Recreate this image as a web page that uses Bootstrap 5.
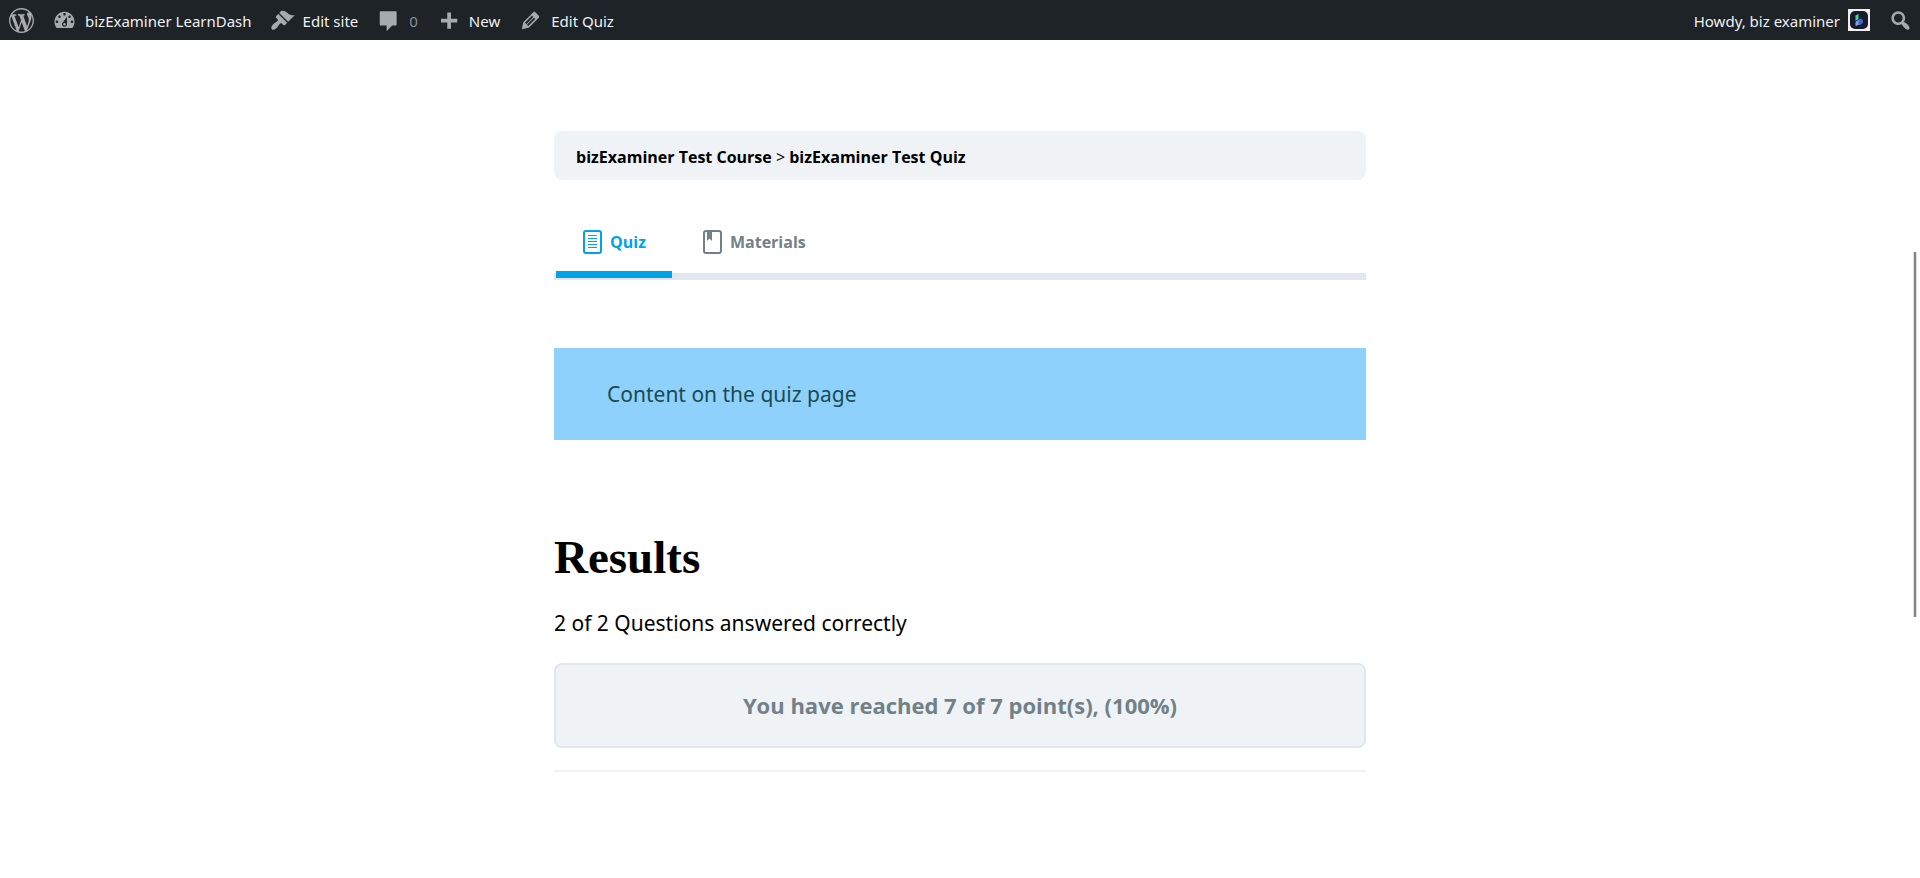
<!DOCTYPE html>
<html lang="en">
<head>
<meta charset="utf-8">
<meta name="viewport" content="width=device-width, initial-scale=1">
<title>bizExaminer Test Quiz</title>
<link rel="stylesheet" href="https://cdn.jsdelivr.net/npm/bootstrap@5.3.0/dist/css/bootstrap.min.css">
<style>
  body { font-family: "Noto Sans", "Open Sans", sans-serif; font-size: 21px; line-height: 32px; color: #000; background: #fff; }
  a { color: inherit; text-decoration: none; }
  .adminbar { height: 40px; background: #1d2327; color: #f0f0f1; font-size: 15px; line-height: 40px; padding-right: 2px; }
  .adminbar a { display: flex; align-items: center; gap: 8px; height: 40px; padding: 0 9px; white-space: nowrap; }
  .adminbar a:last-child { padding-right: 5px; }
  .adminbar span { padding-top: 2px; }
  .adminbar svg { width: 25px; height: 25px; fill: #a7aaad; flex: none; }
  .adminbar .dim { color: #8c8f94; }
  .adminbar .avatar { width: 22px; height: 22px; }
  .quiz-col { max-width: 812px; margin: 91px auto 0; }
  .crumbs { background: #eff3f6; border-radius: 8px; padding: 14px 22px 10px; font-family: "Open Sans", sans-serif; font-size: 16px; line-height: 25px; }
  .crumbs a { font-weight: 700; }
  .quiz-tabs { margin-top: 32px; border-bottom: 7px solid #e2e6ee; padding-left: 2px; font-family: "Open Sans", sans-serif; font-size: 16px; line-height: 24px; }
  .quiz-tabs button { display: flex; align-items: center; gap: 8px; height: 66px; padding: 0 30px; margin-bottom: -5px; border: 0; border-bottom: 7px solid transparent; background: none; color: #728188; font-weight: 700; }
  .quiz-tabs button.active { color: #00a2e8; border-bottom-color: #00a2e8; padding: 0 26px; }
  .quiz-tabs svg { width: 20px; height: 24px; fill: none; stroke: currentColor; }
  .intro { margin: 68px 0 0; padding: 30px 53px; background: #8ed1fc; color: #1b4b52; }
  .result-title { margin: 89px 0 0; font-family: "Liberation Serif", serif; font-size: 47px; line-height: 56px; font-weight: 700; }
  .answered { margin: 22px 0 0; }
  .points { margin: 24px 0 22px; padding: 24px 20px 25px; border: 2px solid #e2e7ed; border-radius: 8px; background: #eff3f6; color: #728188; font-family: "Open Sans", sans-serif; font-size: 22px; font-weight: 700; text-align: center; }
  .divider { margin: 0; border-top: 2px solid #eff3f6; opacity: 1; }
  .scroll-thumb { position: fixed; top: 252px; right: 3px; width: 4px; height: 365px; border: solid #dcdcdc; border-width: 0 1px; background: #858585; }
</style>
</head>
<body>
<nav class="adminbar d-flex justify-content-between" aria-label="Toolbar">
  <div class="d-flex">
    <a href="#" aria-label="About WordPress"><svg viewBox="0 0 20 20"><path d="M20 10c0-5.51-4.49-10-10-10C4.48 0 0 4.49 0 10c0 5.52 4.48 10 10 10 5.51 0 10-4.48 10-10zM7.78 15.37L4.37 6.22c.55-.02 1.17-.08 1.17-.08.5-.06.44-1.13-.06-1.11 0 0-1.45.11-2.37.11-.18 0-.37 0-.58-.01C4.12 2.69 6.87 1.11 10 1.11c2.33 0 4.45.87 6.05 2.34-.68-.11-1.65.39-1.65 1.58 0 .74.45 1.36.9 2.1.35.61.55 1.36.55 2.46 0 1.49-1.4 5-1.4 5l-3.03-8.37c.54-.02.82-.17.82-.17.5-.05.44-1.25-.06-1.22 0 0-1.44.12-2.38.12-.87 0-2.33-.12-2.33-.12-.5-.03-.56 1.2-.06 1.22l.92.08 1.26 3.41zM17.41 10c.24-.64.74-1.87.43-4.25.7 1.29 1.05 2.71 1.05 4.25 0 3.29-1.73 6.24-4.4 7.78.97-2.59 1.94-5.2 2.92-7.78zM6.1 18.09C3.12 16.65 1.11 13.53 1.11 10c0-1.3.23-2.48.72-3.59C3.25 10.3 4.67 14.2 6.1 18.09zm4.03-6.63l2.58 6.98c-.86.29-1.76.45-2.71.45-.79 0-1.57-.11-2.29-.33.81-2.38 1.62-4.74 2.42-7.1z"/></svg></a>
    <a href="#"><svg viewBox="0 0 20 20"><path d="M3.76 16h12.48c1.1-1.37 1.76-3.11 1.76-5 0-4.42-3.58-8-8-8s-8 3.58-8 8c0 1.89.66 3.63 1.76 5zM10 4c.55 0 1 .45 1 1s-.45 1-1 1-1-.45-1-1 .45-1 1-1zM6 6c.55 0 1 .45 1 1s-.45 1-1 1-1-.45-1-1 .45-1 1-1zm8 0c.55 0 1 .45 1 1s-.45 1-1 1-1-.45-1-1 .45-1 1-1zm-5.37 5.55L12 7v6c0 1.1-.9 2-2 2s-2-.9-2-2c0-.57.24-1.08.63-1.45zM4 10c.55 0 1 .45 1 1s-.45 1-1 1-1-.45-1-1 .45-1 1-1zm12 0c.55 0 1 .45 1 1s-.45 1-1 1-1-.45-1-1 .45-1 1-1zm-5 3c0-.55-.45-1-1-1s-1 .45-1 1 .45 1 1 1 1-.45 1-1z"/></svg><span>bizExaminer LearnDash</span></a>
    <a href="#"><svg viewBox="0 0 20 20"><path d="M14.48 11.06L7.41 3.99l1.5-1.5c.5-.56 2.3-.47 3.51.32 1.21.8 1.43 1.28 2.91 2.1 1.18.64 2.45 1.26 4.45.85zm-.71.71L6.7 4.7 4.93 6.47c-.39.39-.39 1.02 0 1.41l1.06 1.06c.39.39.39 1.03 0 1.42-.6.6-1.43 1.11-2.21 1.69-.35.26-.7.53-1.01.84C1.43 14.23.4 16.08 1.4 17.07c.99 1 2.84-.03 4.18-1.36.31-.31.58-.66.85-1.02.57-.78 1.08-1.61 1.69-2.21.39-.39 1.02-.39 1.41 0l1.06 1.06c.39.39 1.02.39 1.41 0z"/></svg><span>Edit site</span></a>
    <a href="#" aria-label="0 comments in moderation"><svg viewBox="0 0 20 20"><path d="M4 2.500h11.500c.6 0 1 .4 1 1V13c0 .6-.4 1-1 1H13l-4.500 4.500V14H4c-.6 0-1-.4-1-1V3.500c0-.6.4-1 1-1z"/></svg><span class="dim">0</span></a>
    <a href="#"><svg viewBox="0 0 20 20"><path d="M17 8.500v3h-5v5H9v-5H4v-3h5v-5h3v5h5z"/></svg><span>New</span></a>
    <a href="#"><svg viewBox="0 0 20 20"><path d="M13.89 3.39l2.710 2.720c.46.46.42 1.240.030 1.640l-8.010 8.020-5.560 1.160 1.160-5.580s7.600-7.630 7.990-8.030c.39-.39 1.220-.39 1.680.070zm-2.730 2.790l-5.590 5.610 1.110 1.110 5.540-5.650zm-2.970 8.230l5.580-5.600-1.070-1.080-5.590 5.600z"/></svg><span>Edit Quiz</span></a>
  </div>
  <div class="d-flex">
    <a href="#"><span>Howdy, biz examiner</span><svg class="avatar" viewBox="0 0 22 22"><path fill="#f0f0f1" d="M0 0h22v22H0z"/><rect x="2" y="2" width="18" height="18" rx="5" fill="#171c2b"/><path fill="#3fd6a4" d="M7.500 6.500l3-1.500v5l-3 2z"/><path fill="#4b63cf" d="M8 13l3-3c3-1 4 1 4 2.500S13 16 11 16s-3-1-3-3z"/><path fill="#86a0f2" d="M7.500 13l3-2v5l-3 1z"/></svg></a>
    <a href="#" aria-label="Search"><svg viewBox="0 0 20 20"><path d="M12.140 4.180c1.870 1.870 2.110 4.750.72 6.890.12.1.22.21.36.31.2.16.47.36.81.59.34.24.56.39.66.47.42.31.73.57.94.78.32.32.6.65.84 1 .25.35.44.69.59 1.040.14.35.21.68.18 1-.02.32-.14.59-.36.81s-.49.34-.81.36c-.31.02-.65-.04-.99-.19-.35-.14-.7-.34-1.040-.59-.35-.24-.68-.52-1-.84-.21-.21-.47-.52-.77-.93-.1-.13-.25-.35-.47-.66-.22-.32-.4-.57-.56-.78-.16-.2-.29-.35-.44-.5-2.070 1.090-4.690.76-6.440-.98-2.140-2.150-2.140-5.640 0-7.780 2.150-2.150 5.630-2.150 7.780 0zm-1.410 6.360c1.360-1.370 1.360-3.580 0-4.950-1.370-1.370-3.590-1.370-4.950 0-1.370 1.370-1.370 3.580 0 4.950 1.360 1.370 3.580 1.370 4.950 0z"/></svg></a>
  </div>
</nav>

<main class="quiz-col">
  <nav class="crumbs" aria-label="Breadcrumb"><a href="#">bizExaminer Test Course</a> &gt; <a href="#">bizExaminer Test Quiz</a></nav>

  <div class="quiz-tabs d-flex" role="tablist">
    <button type="button" class="active" role="tab" aria-selected="true"><svg viewBox="0 0 20 24"><rect x="2" y="1" width="17" height="22" rx="2" stroke-width="2"/><path d="M6 5.500h9M6 8.500h9M6 11.500h9M6 14.500h9M6 17.500h9"/></svg>Quiz</button>
    <button type="button" role="tab" aria-selected="false"><svg viewBox="0 0 20 24"><rect x="2" y="1" width="17" height="22" rx="2" stroke-width="2"/><path fill="currentColor" stroke="none" d="M5 2h5v9L7.500 8.500 5 11z"/></svg>Materials</button>
  </div>

  <p class="intro">Content on the quiz page</p>

  <h2 class="result-title">Results</h2>
  <p class="answered">2 of 2 Questions answered correctly</p>
  <p class="points">You have reached 7 of 7 point(s), (100%)</p>
  <hr class="divider">
</main>
<div class="scroll-thumb" aria-hidden="true"></div>
<script src="https://cdn.jsdelivr.net/npm/bootstrap@5.3.0/dist/js/bootstrap.bundle.min.js"></script>
</body>
</html>
